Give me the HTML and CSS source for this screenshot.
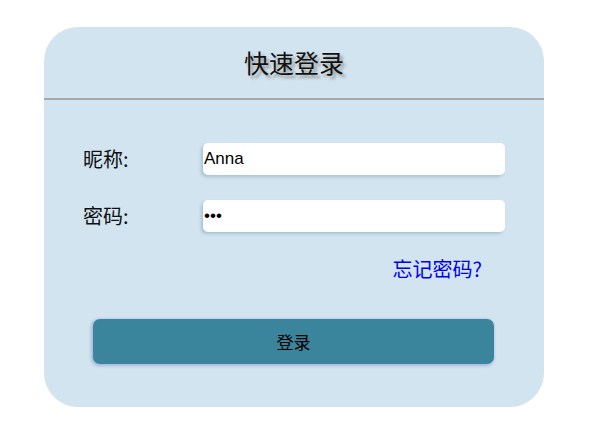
FILE: index.html
```html
<!DOCTYPE html>
<html lang="zh">
<head>
<meta charset="utf-8">
<title>快速登录</title>
<link rel="stylesheet" href="styles.css">
</head>
<body>
<div class="card">
  <div class="header"><h1 class="title">快速登录</h1></div>
  <form class="form">
    <div class="row">
      <label class="label">昵称:</label>
      <input class="field" type="text" value="Anna">
    </div>
    <div class="row">
      <label class="label">密码:</label>
      <input class="field" type="password" value="abc">
    </div>
    <div class="forgot-row"><a class="forgot" href="#">忘记密码?</a></div>
    <button class="submit" type="button">登录</button>
  </form>
</div>
</body>
</html>
```
FILE: styles.css
```css
html, body {
  margin: 0;
  padding: 0;
  background: #ffffff;
}
body {
  font-family: "Noto Sans CJK SC", "Liberation Sans", sans-serif;
}
.card {
  margin: 27px 0 0 44px;
  width: 500px;
  height: 380px;
  background: #d1e4ef;
  border-radius: 34px;
  box-sizing: border-box;
}
.header {
  height: 71px;
  border-bottom: 2px solid #a8a8a8;
  display: flex;
  align-items: center;
  justify-content: center;
}
.title {
  margin: 0;
  font-size: 25px;
  font-weight: normal;
  color: #111;
  line-height: 1;
  text-shadow: 3px 3px 3px #9a9a9a;
}
.form {
  display: flex;
  flex-direction: column;
  padding: 43px 39px 0 39px;
}
.row {
  display: flex;
  align-items: center;
  height: 32px;
}
.row + .row {
  margin-top: 25px;
}
.label {
  width: 120px;
  font-size: 20px;
  color: #111;
  line-height: 1;
}
.field {
  flex: 1;
  height: 32px;
  box-sizing: border-box;
  border: none;
  border-radius: 5px;
  background: #fff;
  padding: 0 0 0 1px;
  font-family: "Liberation Sans", Arial, sans-serif;
  font-size: 17px;
  color: #000;
  box-shadow: -2px 2px 3px #a9c4d2;
  outline: none;
}
.forgot-row {
  display: flex;
  justify-content: flex-end;
  margin-top: 24px;
  padding-right: 23px;
  height: 26px;
  align-items: center;
}
.forgot {
  color: #0000ee;
  text-decoration: none;
  font-size: 20px;
  line-height: 1;
}
.submit {
  margin: 37px 0 0 10px;
  width: 401px;
  height: 45px;
  border: none;
  border-radius: 7px;
  background: #3a859b;
  color: #000;
  font-family: "Noto Sans CJK SC", sans-serif;
  font-size: 17px;
  box-shadow: -1px 1px 3px 1px #a7b7e0;
  padding: 0;
}
```
